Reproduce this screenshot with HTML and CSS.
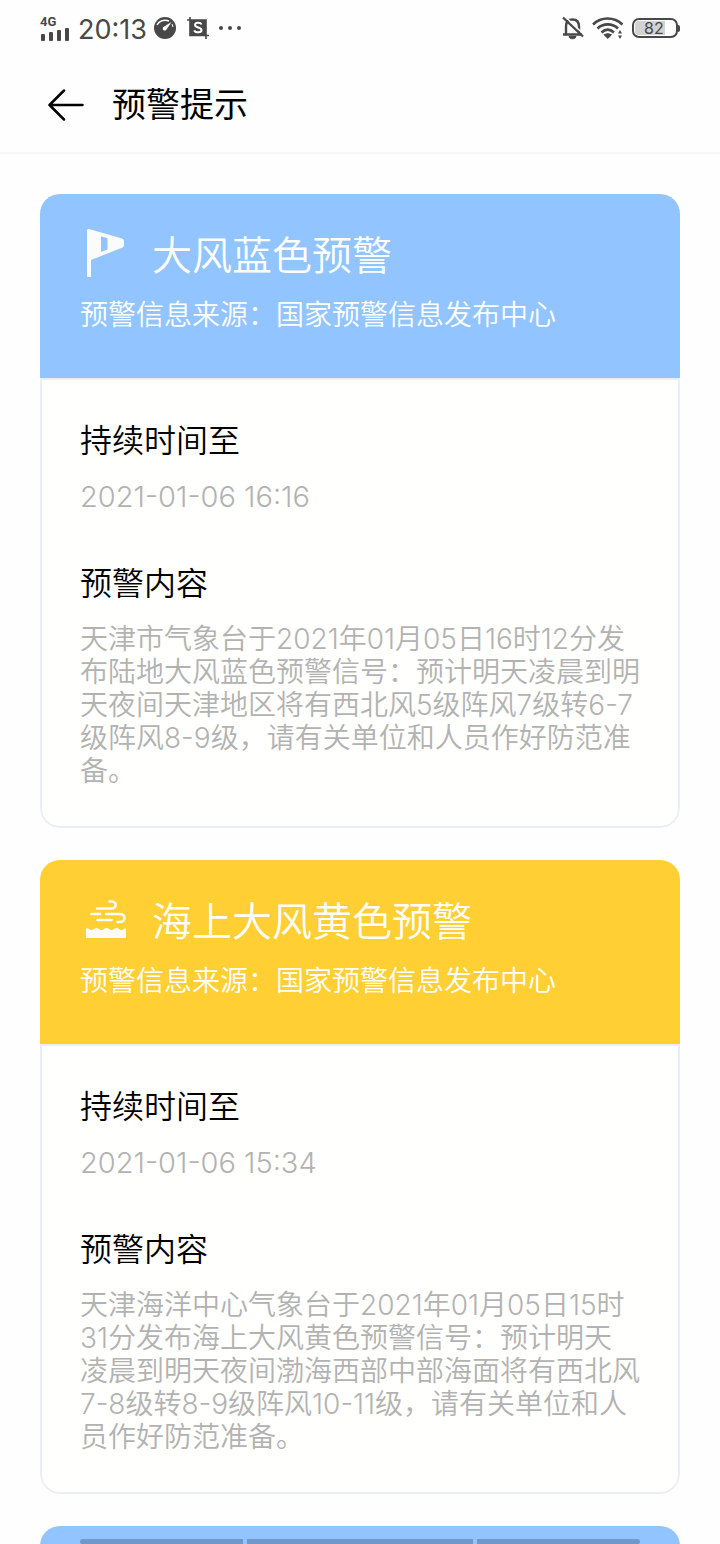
FILE: index.html
```html
<!DOCTYPE html>
<html lang="zh-CN">
<head>
    <meta charset="UTF-8">
    <meta name="viewport" content="width=device-width, initial-scale=1.0">
    <title>预警提示</title>
    <link rel="stylesheet" href="styles.css">
</head>
<body>
    <!-- 状态栏 -->
    <div class="status-bar">
        <div class="status-left">
            <div class="signal">
                <span class="network">4G</span>
                <svg width="30" height="13" viewBox="0 0 30 13" fill="#484848">
                    <rect x="1" y="6" width="4" height="7" rx="1"/>
                    <rect x="9" y="4" width="4" height="9" rx="1"/>
                    <rect x="17" y="2" width="4" height="11" rx="1"/>
                    <rect x="25" y="0" width="4" height="13" rx="1"/>
                </svg>
            </div>
            <span class="time">20:13</span>
            <svg class="gauge-icon" width="22" height="22" viewBox="0 0 22 22">
                <circle cx="11" cy="11" r="11" fill="#484848"/>
                <path d="M3 8C5 4 10 2 15 4" fill="none" stroke="#fff" stroke-width="1.500"/>
                <path d="M17.500 5L12.500 12.500A2 2 0 1 1 9.800 9.800Z" fill="#fff"/>
                <path d="M18 7l1 3" stroke="#fff" stroke-width="1"/>
            </svg>
            <svg class="shot-icon" width="22" height="22" viewBox="0 0 22 22">
                <path d="M0 3h19v19M3 0v18.500h19" fill="none" stroke="#484848" stroke-width="1.600"/>
                <rect x="3" y="3" width="16" height="15" fill="#484848"/>
                <path d="M14.500 7.500C13.500 5 8 5 8 8s6.500 2 6.500 5-6 3.200-7.300.3" fill="none" stroke="#fff" stroke-width="2"/>
            </svg>
            <svg width="24" height="6" viewBox="0 0 24 6" fill="#484848">
                <circle cx="3" cy="3" r="2"/>
                <circle cx="12" cy="3" r="2"/>
                <circle cx="21" cy="3" r="2"/>
            </svg>
        </div>
        <div class="status-right">
            <svg width="22" height="24" viewBox="0 0 22 24" fill="none" stroke="#484848" stroke-width="2.400">
                <path d="M4 18.500V10.500C4 6 6.500 3.500 10.500 3.500S17 6 17 10.500V18.500M1 18.500h19"/>
                <path d="M7 20.500c0 3 7 3 7 0z" fill="#484848" stroke-width="1"/>
                <path d="M3 .500l19 18" stroke="#fefefe" stroke-width="1.500"/>
                <path d="M1 1.500l20 19"/>
            </svg>
            <svg class="wifi-icon" width="32" height="24" viewBox="0 0 32 24" fill="none" stroke="#484848" stroke-width="2.600">
                <path d="M1 8.500C9 .500 22 .500 30.500 8.500"/>
                <path d="M5.500 12.500C11 7 20.500 7 26 12.500"/>
                <path d="M9.500 16.500c4-3.800 8.500-3.800 12.500 0"/>
                <path d="M11.500 18.800c2.500-2 6-2 8.500 0L15.750 23z" fill="#484848" stroke="none"/>
                <path d="M26 17.500l2-3.500 2 3.500zM26 19.500l2 3.500 2-3.500z" fill="#484848" stroke="none"/>
            </svg>
            <div class="battery"><span class="battery-level">82</span></div>
        </div>
    </div>

    <header class="header">
        <button type="button" class="back-btn" aria-label="返回">
            <svg width="36" height="32" viewBox="0 0 36 32" fill="none" stroke="#000" stroke-width="2.500" stroke-linecap="round" stroke-linejoin="round">
                <path d="M34.500 16H1.500M16 1.500L1.500 16 16 30.500"/>
            </svg>
        </button>
        <h1>预警提示</h1>
    </header>

    <main class="container">
        <section class="card">
            <div class="card-header blue">
                <div class="card-title">
                    <svg width="52" height="56" viewBox="0 0 52 56" fill="#fbfbfb">
                        <path fill-rule="evenodd" d="M7 2.500Q7 .500 9 1L42 10.500Q44 11.200 44 13V17.500Q44 19 42.500 19.600L11 32V49H7ZM21 8.500V24L27.500 21.500V10Z"/>
                    </svg>
                    <h2>大风蓝色预警</h2>
                </div>
                <p class="source">预警信息来源：国家预警信息发布中心</p>
            </div>
            <div class="card-body">
                <h3>持续时间至</h3>
                <p class="date">2021-01-06 16:16</p>
                <h3>预警内容</h3>
                <p>天津市气象台于2021年01月05日16时12分发<br>布陆地大风蓝色预警信号：预计明天凌晨到明<br>天夜间天津地区将有西北风5级阵风7级转6-7<br>级阵风8-9级，请有关单位和人员作好防范准<br>备。</p>
            </div>
        </section>

        <section class="card">
            <div class="card-header yellow">
                <div class="card-title">
                    <svg width="52" height="56" viewBox="0 0 52 56">
                        <g fill="none" stroke="#fbfbfb" stroke-width="2.600" stroke-linecap="round">
                            <path d="M17 14.500H31C37 14.500 37 7.500 32 7.500H29.500"/>
                            <path d="M11.500 20H20M26 20H39C46.500 20 46 28 39.500 28H37.500M17.500 26H31.500"/>
                        </g>
                        <path d="M6 34.500c3-1 3 1.500 5.500 1.500S14 34 16.500 34s2.500 2 5 2 2.500-2 5-2 2.500 2 5 2 2.500-2 5-2 2.500 2 5 2S44 33.500 46 34.500V44H6Z" fill="#fbfbfb"/>
                    </svg>
                    <h2>海上大风黄色预警</h2>
                </div>
                <p class="source">预警信息来源：国家预警信息发布中心</p>
            </div>
            <div class="card-body">
                <h3>持续时间至</h3>
                <p class="date">2021-01-06 15:34</p>
                <h3>预警内容</h3>
                <p>天津海洋中心气象台于2021年01月05日15时<br>31分发布海上大风黄色预警信号：预计明天<br>凌晨到明天夜间渤海西部中部海面将有西北风<br>7-8级转8-9级阵风10-11级，请有关单位和人<br>员作好防范准备。</p>
            </div>
        </section>

        <section class="card">
            <div class="card-header blue"></div>
        </section>
    </main>

    <!-- 底部手势条 -->
    <div class="gesture-bar">
        <span></span>
        <span></span>
        <span></span>
    </div>
</body>
</html>
```
FILE: styles.css
```css
* {
    box-sizing: border-box;
}
body {
    height: 100vh;
    margin: 0;
    overflow: hidden;
    background: #fefefe;
    color: #000;
    font-family: Inter, "Noto Sans CJK SC", sans-serif;
    font-weight: 350;
}
h1, h2, h3, p {
    margin: 0;
}
svg {
    display: block;
    flex: none;
}
.status-bar {
    display: flex;
    justify-content: space-between;
    height: 56px;
    padding: 0 40px;
    color: #484848;
}
.status-left,
.status-right {
    display: flex;
    align-items: center;
}
.signal {
    display: flex;
    flex-direction: column;
}
.network {
    font-family: Roboto, sans-serif;
    font-size: 13px;
    font-weight: 700;
    line-height: 12px;
}
.time {
    margin: 2px 7px 0 8px;
    font-size: 27px;
    font-weight: 400;
}
.gauge-icon {
    margin-right: 11px;
}
.shot-icon {
    margin-right: 9px;
}
.wifi-icon {
    margin: 0 8px;
}
.battery {
    position: relative;
    width: 46px;
    height: 20px;
    margin-right: 2px;
    padding: 1px;
    border: 2px solid #484848;
    border-radius: 7px;
}
.battery::after {
    content: "";
    position: absolute;
    top: 5px;
    right: -4px;
    width: 2px;
    height: 7px;
    border-radius: 0 2px 2px 0;
    background: #484848;
}
.battery-level {
    display: block;
    width: 30px;
    padding-left: 9px;
    border-radius: 4px 0 0 4px;
    background: #d2d2d2;
    font-size: 16px;
    font-weight: 400;
    line-height: 14px;
}
.header {
    display: flex;
    align-items: center;
    height: 98px;
    padding: 2px 48px 0;
    border-bottom: 2px solid #f7f7f7;
}
.back-btn {
    margin-right: 28px;
    padding: 0;
    border: 0;
    background: none;
}
.header h1 {
    font-size: 34px;
    font-weight: 400;
    line-height: 48px;
}
.container {
    display: flex;
    flex-direction: column;
    gap: 32px;
    padding: 40px;
}
.card {
    border-radius: 20px;
    background: #fffffd;
    overflow: hidden;
}
.card-header {
    min-height: 184px;
    padding: 34px 40px;
    color: #fffffd;
}
.blue {
    background: #92c5ff;
}
.yellow {
    background: #ffcf33;
}
.card-title {
    display: flex;
    align-items: center;
    gap: 20px;
}
.card-title h2 {
    font-size: 40px;
    font-weight: 350;
    line-height: 56px;
}
.source {
    margin-top: 11px;
    font-size: 28px;
    line-height: 40px;
}
.card-body {
    padding: 39px 38px 38px;
    border: 2px solid #ebeff5;
    border-radius: 0 0 20px 20px;
}
.card-body h3 {
    margin-bottom: 17px;
    font-size: 32px;
    font-weight: 350;
    line-height: 44px;
}
.card-body p {
    color: #b2b2b2;
    font-size: 28px;
    line-height: 33px;
    white-space: nowrap;
}
.card-body .date {
    font-size: 29px;
}
.card-body p + h3 {
    margin-top: 49px;
}
.gesture-bar {
    position: fixed;
    right: 80px;
    bottom: 0;
    left: 80px;
    display: grid;
    grid-template-columns: 163fr 226fr 163fr;
    gap: 4px;
    height: 5px;
}
.gesture-bar span {
    background: #7099c7;
}
.gesture-bar span:first-child {
    border-radius: 3px 0 0 3px;
}
.gesture-bar span:last-child {
    border-radius: 0 3px 3px 0;
}
```
